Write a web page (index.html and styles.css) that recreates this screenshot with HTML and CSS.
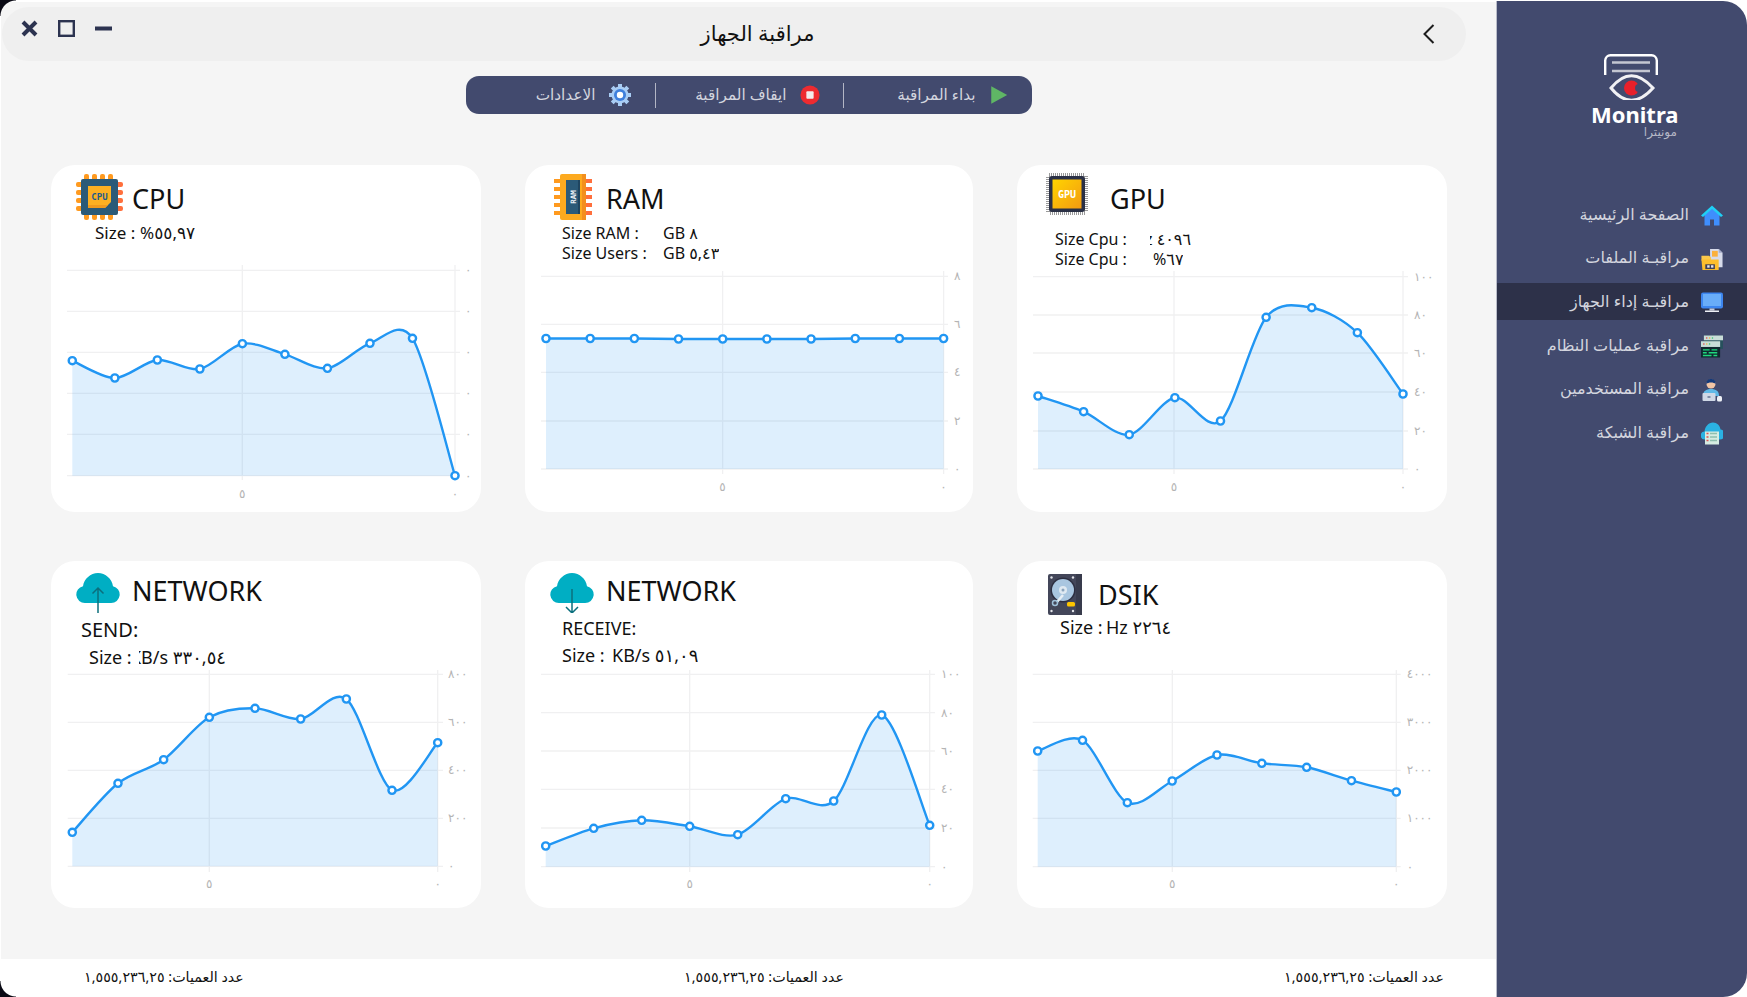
FILE: index.html
```html
<!DOCTYPE html>
<html lang="ar">
<head>
    <meta charset="UTF-8">
    <meta name="viewport" content="width=device-width, initial-scale=1.0">
    <title>Monitra</title>
    <link rel="stylesheet" href="styles.css">
</head>
<body>
    <span class="corner corner-top"></span>
    <span class="corner corner-bottom"></span>

    <div class="window">
        <main class="main">
            <header class="titlebar">
                <div class="win-controls">
                    <svg class="win-btn" viewBox="0 0 17 17"><path d="M2 2l13 13M15 2L2 15" stroke="#2c3350" stroke-width="4" fill="none"/></svg>
                    <svg class="win-btn" viewBox="0 0 17 17"><rect x="1.2" y="1.2" width="14.6" height="14.6" stroke="#2c3350" stroke-width="2.4" fill="none"/></svg>
                    <svg class="win-btn" viewBox="0 0 17 17"><rect y="6.5" width="17" height="4" fill="#2c3350"/></svg>
                </div>
                <h1 class="page-title">مراقبة الجهاز</h1>
                <svg class="back" viewBox="0 0 12 20"><path d="M10.5 1L1.5 10l9 9" stroke="#1d1d1d" stroke-width="2" fill="none"/></svg>
            </header>

            <nav class="toolbar" dir="rtl">
                <a class="tool">
                    <svg class="tool-icon" viewBox="0 0 22 22"><path d="M2.500 1.500L20 11 2.500 20.500z" fill="#5fb665"/></svg>
                    بداء المراقبة
                </a>
                <a class="tool">
                    <svg class="tool-icon" viewBox="0 0 22 22"><circle cx="11" cy="11" r="10.500" fill="#ee2b30"/><rect x="7" y="7" width="8" height="8" rx="1" fill="#f3ecec"/></svg>
                    ايقاف المراقبة
                </a>
                <a class="tool">
                    <svg class="tool-icon tool-gear" viewBox="0 0 24 24">
                        <path d="M12 12m-8.500 0a8.500 8.500 0 1 0 17 0a8.500 8.500 0 1 0-17 0" fill="#a9cdf5"/>
                        <path d="M12 1v5M12 18v5M1 12h5M18 12h5M4.200 4.200l3.500 3.500M16.300 16.300l3.500 3.500M19.800 4.200l-3.500 3.500M7.700 16.300l-3.500 3.500" stroke="#a9cdf5" stroke-width="4"/>
                        <circle cx="12" cy="12" r="6" fill="#3f7fdc"/>
                        <circle cx="12" cy="12" r="3.200" fill="#fff"/>
                    </svg>
                    الاعدادات
                </a>
            </nav>

            <div class="cards">
                <section class="card card-cpu">
                    <div class="card-head">
                        <svg class="card-icon" viewBox="0 0 47 46">
                            <g fill="#ff9a1f">
                                <rect x="8" y="0" width="5" height="7" rx="2"/><rect x="16" y="0" width="5" height="7" rx="2"/><rect x="24" y="0" width="5" height="7" rx="2"/><rect x="32" y="0" width="5" height="7" rx="2"/>
                                <rect x="8" y="39" width="5" height="7" rx="2"/><rect x="16" y="39" width="5" height="7" rx="2"/><rect x="24" y="39" width="5" height="7" rx="2"/><rect x="32" y="39" width="5" height="7" rx="2"/>
                                <rect x="0" y="8" width="7" height="5" rx="2"/><rect x="0" y="16" width="7" height="5" rx="2"/><rect x="0" y="24" width="7" height="5" rx="2"/><rect x="0" y="32" width="7" height="5" rx="2"/>
                            </g>
                            <g fill="#ff6f3c">
                                <rect x="40" y="8" width="7" height="5" rx="2"/><rect x="40" y="16" width="7" height="5" rx="2"/><rect x="40" y="24" width="7" height="5" rx="2"/><rect x="40" y="32" width="7" height="5" rx="2"/>
                            </g>
                            <rect x="5" y="5" width="37" height="36" rx="2" fill="#2b5a78"/>
                            <path d="M12 12h23v16l-6 6H12z" fill="#fdb022"/>
                            <path d="M12 31h20l-3 3H12z" fill="#f09a1e"/>
                            <text x="23.500" y="26" class="chip-text" fill="#1f5c8c">CPU</text>
                        </svg>
                        <h2 class="card-title">CPU</h2>
                    </div>
                    <div class="stats">
                        <p class="stat"><span class="stat-label">Size :</span><span class="stat-value">٥٥,٩٧%</span></p>
                    </div>
                    <svg class="chart" data-chart="cpu"></svg>
                </section>

                <section class="card card-ram">
                    <div class="card-head">
                        <svg class="card-icon" viewBox="0 0 38 46">
                            <g fill="#ff9a1f">
                                <rect x="0" y="5" width="6" height="4"/><rect x="0" y="13" width="6" height="4"/><rect x="0" y="21" width="6" height="4"/><rect x="0" y="29" width="6" height="4"/><rect x="0" y="37" width="6" height="4"/>
                            </g>
                            <g fill="#ff6f3c">
                                <rect x="32" y="5" width="6" height="4"/><rect x="32" y="13" width="6" height="4"/><rect x="32" y="21" width="6" height="4"/><rect x="32" y="29" width="6" height="4"/><rect x="32" y="37" width="6" height="4"/>
                            </g>
                            <rect x="6" y="0" width="26" height="46" rx="2" fill="#fdaa1f"/>
                            <rect x="28" y="0" width="4" height="46" fill="#f38f1e"/>
                            <rect x="12" y="6" width="14" height="34" fill="#2b5a78"/>
                            <rect x="24" y="6" width="2" height="34" fill="#1f4560"/>
                            <text x="-23" y="22" transform="rotate(-90)" class="chip-text chip-text-ram" fill="#e8eef3">RAM</text>
                        </svg>
                        <h2 class="card-title">RAM</h2>
                    </div>
                    <div class="stats">
                        <p class="stat"><span class="stat-label">Size RAM :</span><span class="stat-value">٨ GB</span></p>
                        <p class="stat"><span class="stat-label">Size Users :</span><span class="stat-value">٥,٤٣ GB</span></p>
                    </div>
                    <svg class="chart" data-chart="ram"></svg>
                </section>

                <section class="card card-gpu">
                    <div class="card-head">
                        <svg class="card-icon" viewBox="0 0 42 42">
                            <defs>
                                <linearGradient id="gpuGold" x1="0" y1="0" x2="1" y2="1">
                                    <stop offset="0" stop-color="#ffd400"/>
                                    <stop offset="1" stop-color="#f39a12"/>
                                </linearGradient>
                            </defs>
                            <rect x="3" y="3" width="36" height="36" fill="none" stroke="#9a9a9a" stroke-width="6" stroke-dasharray="1 1"/>
                            <rect x="3" y="3" width="36" height="36" rx="3" fill="#2a3045"/>
                            <rect x="6.500" y="6.500" width="29" height="29" fill="url(#gpuGold)"/>
                            <text x="21" y="24.500" class="chip-text chip-text-gpu" fill="#fff">GPU</text>
                        </svg>
                        <h2 class="card-title">GPU</h2>
                    </div>
                    <div class="stats">
                        <p class="stat"><span class="stat-label">Size Cpu :</span><span class="stat-value value-clip">٤٠٩٦ MHz</span></p>
                        <p class="stat"><span class="stat-label stat-label-wide">Size Cpu :</span><span class="stat-value">٦٧%</span></p>
                    </div>
                    <svg class="chart" data-chart="gpu"></svg>
                </section>

                <section class="card card-send">
                    <div class="card-head">
                        <svg class="card-icon" viewBox="0 0 44 40">
                            <path d="M9 30a8.500 8.500 0 0 1-2-16.800C8 6 14.500 0 22 0s14 6 15 13.200A8.500 8.500 0 0 1 35 30z" fill="#00aec3"/>
                            <path d="M22 40V15M16.500 20.500L22 15l5.500 5.500" stroke="#0b6f7d" stroke-width="1.500" fill="none"/>
                        </svg>
                        <h2 class="card-title">NETWORK</h2>
                    </div>
                    <div class="stats">
                        <p class="stat-name">SEND:</p>
                        <p class="stat"><span class="stat-label">Size :</span><span class="stat-value value-clip">٣٣٠,٥٤ KB/s</span></p>
                    </div>
                    <svg class="chart" data-chart="send"></svg>
                </section>

                <section class="card card-receive">
                    <div class="card-head">
                        <svg class="card-icon" viewBox="0 0 44 40">
                            <path d="M9 30a8.500 8.500 0 0 1-2-16.800C8 6 14.500 0 22 0s14 6 15 13.200A8.500 8.500 0 0 1 35 30z" fill="#00aec3"/>
                            <path d="M22 16v24M16 34l6 6 6-6" stroke="#0b6f7d" stroke-width="1.500" fill="none"/>
                        </svg>
                        <h2 class="card-title">NETWORK</h2>
                    </div>
                    <div class="stats">
                        <p class="stat-name">RECEIVE:</p>
                        <p class="stat"><span class="stat-label">Size :</span><span class="stat-value">٥١,٠٩ KB/s</span></p>
                    </div>
                    <svg class="chart" data-chart="receive"></svg>
                </section>

                <section class="card card-disk">
                    <div class="card-head">
                        <svg class="card-icon" viewBox="0 0 34 41">
                            <rect width="34" height="41" rx="2" fill="#434659"/>
                            <rect x="28" width="6" height="41" fill="#383b4c"/>
                            <circle cx="15" cy="16" r="12.500" fill="#2c2e40"/>
                            <circle cx="15" cy="16" r="11" fill="#a9c6e0"/>
                            <circle cx="15" cy="16" r="4" fill="#dfe9f2"/>
                            <circle cx="15" cy="16" r="1.500" fill="#8aa4bd"/>
                            <path d="M15 21l-6 7" stroke="#e6eef5" stroke-width="2.500"/>
                            <circle cx="7" cy="29" r="2.500" fill="none" stroke="#9fc0da" stroke-width="1.500"/>
                            <rect x="19" y="28" width="8" height="4.500" rx="1.500" fill="#fdc500"/>
                            <g fill="#e3e5ea">
                                <circle cx="3.500" cy="3.500" r="1.200"/><circle cx="25" cy="3.500" r="1.200"/><circle cx="3.500" cy="37" r="1.200"/><circle cx="25" cy="37" r="1.200"/>
                            </g>
                        </svg>
                        <h2 class="card-title">DSIK</h2>
                    </div>
                    <div class="stats">
                        <p class="stat"><span class="stat-label">Size :</span><span class="stat-value">٢٢٦٤ Hz</span></p>
                    </div>
                    <svg class="chart" data-chart="disk"></svg>
                </section>
            </div>

            <footer class="footer" dir="rtl">
                <span>عدد العميات: ١,٥٥٥,٢٣٦,٢٥</span>
                <span>عدد العميات: ١,٥٥٥,٢٣٦,٢٥</span>
                <span>عدد العميات: ١,٥٥٥,٢٣٦,٢٥</span>
            </footer>
        </main>

        <aside class="sidebar">
            <div class="logo">
                <svg class="logo-mark" viewBox="0 0 54 46">
                    <path d="M1.200 21V6.500A5.500 5.500 0 0 1 6.500 1.200h41A5.500 5.500 0 0 1 52.800 6.500V21" stroke="#fff" stroke-width="2.400" fill="none"/>
                    <path d="M8 8.500h38M8 17h38" stroke="#c3c6d1" stroke-width="2.500"/>
                    <path d="M7 34Q27 9.500 49 34Q27 58.500 7 34z" stroke="#f1f1f4" stroke-width="3" fill="none"/>
                    <circle cx="27.500" cy="34" r="7.500" fill="#e8202a"/>
                    <circle cx="35" cy="34" r="4" fill="#424a6e"/>
                </svg>
                <div class="logo-name">Monitra</div>
                <div class="logo-sub">مونيترا</div>
            </div>

            <nav class="side-nav" dir="rtl">
                <a class="side-link">
                    <svg class="side-icon" viewBox="0 0 22 20">
                        <path d="M3.500 9L11 3l7.500 6v11h-5.500v-6h-4v6H3.500z" fill="#3f8efc"/>
                        <path d="M0 10L11 0l11 10-2 1.500L11 3.500 2 11.500z" fill="#1fd0f5"/>
                    </svg>
                    الصفحة الرئيسية
                </a>
                <a class="side-link">
                    <svg class="side-icon" viewBox="0 0 22 24">
                        <path d="M9 1h9l4 4v15H9z" fill="#d7dbea"/>
                        <path d="M18 1l4 4h-4z" fill="#a5abc9"/>
                        <rect x="11" y="3" width="6" height="6" fill="#fbb03b"/>
                        <path d="M0 8h8l2 2v3H0z" fill="#fbc84a"/>
                        <path d="M0 12h18v11H1z" fill="#fdbe2c"/>
                        <rect x="4" y="17" width="10" height="5" fill="#3d3f58"/>
                        <rect x="6" y="18" width="2.500" height="2.500" fill="#e7e7ee"/>
                        <rect x="10" y="18" width="2.500" height="2.500" fill="#e7e7ee"/>
                    </svg>
                    مراقبـة الملفات
                </a>
                <a class="side-link is-active">
                    <svg class="side-icon" viewBox="0 0 22 20">
                        <rect width="22" height="16" rx="2" fill="#3d86ef"/>
                        <rect x="2" y="1.500" width="18" height="12" fill="#69adf8"/>
                        <rect x="8.500" y="16" width="5" height="2" fill="#c4cbdc"/>
                        <rect x="4" y="18" width="14" height="1.500" fill="#eef0f5"/>
                    </svg>
                    مراقبـة إداء الجهاز
                </a>
                <a class="side-link">
                    <svg class="side-icon" viewBox="0 0 23 23">
                        <rect x="3" width="20" height="14" fill="#27505c"/>
                        <rect x="3" y="0" width="20" height="5" fill="#c9ddd8"/>
                        <rect x="0" y="6" width="20" height="6" fill="#c9ddd8"/>
                        <circle cx="6" cy="2.500" r=".8" fill="#e64040"/><circle cx="9" cy="2.500" r=".8" fill="#f2b632"/><circle cx="12" cy="2.500" r=".8" fill="#35c46f"/>
                        <circle cx="3" cy="9" r=".8" fill="#e64040"/><circle cx="6" cy="9" r=".8" fill="#f2b632"/><circle cx="9" cy="9" r=".8" fill="#35c46f"/>
                        <rect x="0" y="12" width="20" height="11" fill="#10282f"/>
                        <path d="M2 15h7M11 15h6M2 18h4M8 18h9M2 21h9M13 21h4" stroke="#1fd87e" stroke-width="1.500"/>
                    </svg>
                    مراقبة عمليات النظام
                </a>
                <a class="side-link">
                    <svg class="side-icon" viewBox="0 0 22 23">
                        <circle cx="10" cy="5" r="4.500" fill="#f2c5a5"/>
                        <path d="M5.500 5C5 1 8 0 10 0s5 1 4.500 5C13 3 7 3 5.500 5z" fill="#143a7a"/>
                        <path d="M2 17c0-5 3-7 8-7s8 2 8 7z" fill="#5fb8e6"/>
                        <rect x="1.500" y="14" width="13" height="8" rx="1" fill="#cfd8e6"/>
                        <rect x="6.500" y="17" width="3" height="2" fill="#7f8ea8"/>
                        <rect x="16" y="17" width="5" height="5.500" rx="1.500" fill="#eef1f6"/>
                    </svg>
                    مراقبة المستخدمين
                </a>
                <a class="side-link">
                    <svg class="side-icon" viewBox="0 0 22 22">
                        <path d="M4 17a4 4 0 0 1-.5-8C4 4 7.500 0 12 0c4 0 7 3 7.500 7a5 5 0 0 1-1 10z" fill="#2bb2e2"/>
                        <rect x="4" y="9" width="14" height="13" fill="#d6ece2"/>
                        <path d="M9 11h7M9 14.500h7M9 18h7" stroke="#8fbfae" stroke-width="1.500"/>
                        <path d="M5.500 11h2M5.500 14.500h2M5.500 18h2" stroke="#e05252" stroke-width="1.500"/>
                    </svg>
                    مراقبة الشبكة
                </a>
            </nav>
        </aside>
    </div>

    <script src="chart.js"></script>
</body>
</html>
```

FILE: styles.css
```css
* {
    box-sizing: border-box;
}

body {
    margin: 0;
    background-color: #fff;
    font-family: "Noto Sans", "DejaVu Sans", sans-serif;
    color: #111;
    overflow: hidden;
}

.window {
    display: flex;
    width: 1747px;
    height: 997px;
}

.corner {
    position: absolute;
    left: 0;
    width: 16px;
    height: 16px;
}

.corner-top {
    top: 0;
    background: radial-gradient(circle at 100% 100%, transparent 15px, #0a0a14 16px);
}

.corner-bottom {
    bottom: 0;
    background: radial-gradient(circle at 100% 0, transparent 15px, #0a0a14 16px);
}

/* main area */
.main {
    display: flex;
    flex-direction: column;
    width: 1496px;
    background-color: #f5f5f5;
    border-top: 2px solid #fff;
    border-left: 1px solid #fff;
}

.titlebar {
    display: flex;
    align-items: center;
    flex: none;
    height: 54px;
    margin: 5px 30px 0 1px;
    padding: 0 31px 0 19px;
    background-color: #efefef;
    border-radius: 27px;
}

.win-controls {
    display: flex;
    gap: 20px;
    margin-top: -11px;
}

.win-btn {
    width: 17px;
    height: 17px;
}

.page-title {
    flex: 1;
    margin: 0;
    padding: 0 20px 3px 0;
    font-size: 21px;
    font-weight: 400;
    text-align: center;
}

.back {
    width: 12px;
    height: 20px;
}

.toolbar {
    display: grid;
    grid-template-columns: 189px 188px 189px;
    flex: none;
    width: 566px;
    height: 38px;
    margin: 15px auto 0;
    background-color: #424a6e;
    border-radius: 13px;
}

.tool {
    display: flex;
    align-items: center;
    gap: 13px;
    align-self: center;
    height: 25px;
    padding: 0 23px 3px 0;
    border-left: 1px solid rgba(255, 255, 255, 0.6);
    color: #d3d5de;
    font-size: 15.300px;
}

.tool:last-child {
    border-left: none;
}

.tool-icon {
    width: 20px;
    height: 22px;
    margin-top: 3px;
}

.tool-gear {
    width: 24px;
    height: 24px;
    margin-left: -1px;
}

/* cards */
.cards {
    display: grid;
    grid-template-columns: 430px 448px 430px;
    grid-auto-rows: 347px;
    column-gap: 44px;
    row-gap: 49px;
    flex: none;
    margin: 51px 0 0 50px;
}

.card {
    display: flex;
    flex-direction: column;
    background-color: #fff;
    border-radius: 24px;
    overflow: hidden;
}

.card-head {
    display: flex;
    align-items: center;
    flex: none;
}

.card-icon {
    flex: none;
}

.card-title {
    margin: 0;
    font-size: 27px;
    font-weight: 400;
    line-height: 30px;
}

.stats {
    flex: 1 1 0;
    min-height: 0;
}

.stat,
.stat-name {
    margin: 0;
}

.stat {
    display: flex;
    font-size: 16px;
    line-height: 20px;
}

.stat-label {
    flex: none;
}

.stat-value {
    direction: rtl;
    white-space: nowrap;
    overflow: hidden;
}

.chart {
    display: block;
    flex: none;
    width: 100%;
    height: 252px;
}

.chip-text {
    font-family: "DejaVu Sans Mono", monospace;
    font-size: 9px;
    font-weight: 700;
    text-anchor: middle;
}

.chip-text-ram {
    font-size: 7.500px;
}

.chip-text-gpu {
    font-size: 10px;
}

.card-cpu .card-head {
    padding: 9px 0 0 25px;
    gap: 9px;
}

.card-cpu .card-icon {
    width: 47px;
    height: 46px;
}

.card-cpu .card-title,
.card-ram .card-title {
    margin-top: 4px;
}

.card-cpu .stats {
    margin-top: 2px;
    padding-left: 44px;
}

.card-cpu .stat {
    font-size: 17px;
    line-height: 22px;
}

.card-cpu .stat-label {
    width: 45px;
}

.card-ram .card-head {
    padding: 9px 0 0 29px;
    gap: 14px;
}

.card-ram .card-icon {
    width: 38px;
    height: 46px;
}

.card-ram .stats {
    margin-top: 3px;
    padding-left: 37px;
}

.card-ram .stat-label {
    width: 101px;
}

.card-gpu .card-head {
    padding: 8px 0 0 29px;
    gap: 22px;
}

.card-gpu .card-icon {
    width: 42px;
    height: 42px;
}

.card-gpu .card-title {
    margin-top: 10px;
}

.card-gpu .stats {
    margin-top: 14px;
    padding-left: 38px;
}

.card-gpu .stat-label {
    width: 95px;
}

.card-gpu .stat-label-wide {
    width: 98px;
}

.card-gpu .value-clip {
    width: 41px;
}

.card-send .card-head,
.card-receive .card-head {
    padding: 12px 0 0 25px;
    gap: 12px;
}

.card-send .card-icon,
.card-receive .card-icon {
    width: 44px;
    height: 40px;
}

.card-send .card-title,
.card-receive .card-title {
    margin-top: -5px;
}

.stat-name {
    font-size: 20px;
    line-height: 27px;
}

.card-send .stats {
    margin-top: 3px;
}

.card-send .stat-name {
    padding-left: 30px;
}

.card-send .stat {
    margin-top: 4px;
    padding-left: 38px;
    font-size: 18px;
}

.card-send .stat-label {
    width: 50px;
}

.card-send .value-clip {
    width: 87px;
}

.card-receive .stats {
    margin-top: 2px;
    padding-left: 37px;
}

.card-receive .stat-name {
    font-size: 18px;
}

.card-receive .stat {
    margin-top: 3px;
    font-size: 18px;
}

.card-receive .stat-label {
    width: 50px;
}

.card-disk .card-head {
    padding: 13px 0 0 31px;
    gap: 16px;
}

.card-disk .card-icon {
    width: 34px;
    height: 41px;
}

.card-disk .stats {
    margin-top: 1px;
    padding-left: 43px;
}

.card-disk .stat {
    font-size: 18px;
    line-height: 22px;
}

.card-disk .stat-label {
    width: 46px;
}

.grid-line {
    stroke: #f0f0f1;
    stroke-width: 1.300;
}

.area {
    fill: rgba(33, 150, 243, 0.15);
}

.line {
    fill: none;
    stroke: #2196f3;
    stroke-width: 2.400;
}

.dot {
    fill: #fff;
    stroke: #2196f3;
    stroke-width: 2.400;
}

.tick {
    fill: #b4b4b4;
    font-family: "DejaVu Sans", sans-serif;
    font-size: 12px;
}

.footer {
    display: flex;
    justify-content: space-between;
    align-items: center;
    flex: none;
    height: 38px;
    margin-top: auto;
    padding: 0 52px 3px 83px;
    background-color: #fff;
    font-size: 14.300px;
}

/* sidebar */
.sidebar {
    width: 251px;
    margin-top: 1px;
    padding-top: 53px;
    background-color: #424a6e;
    border-left: 1px solid #b9bcc9;
    border-radius: 0 24px 24px 0;
}

.logo {
    height: 142px;
    padding-left: 94px;
    color: #fff;
}

.logo-mark {
    display: block;
    width: 54px;
    height: 46px;
    margin-left: 13px;
}

.logo-name {
    margin-top: 2px;
    font-size: 22px;
    font-weight: 700;
    line-height: 24px;
}

.logo-sub {
    width: 86px;
    margin-top: 1px;
    color: #b5b8c6;
    font-size: 12px;
    line-height: 10px;
    text-align: right;
}

.side-nav {
    display: flex;
    flex-direction: column;
    gap: 6.700px;
}

.side-link {
    display: flex;
    align-items: center;
    gap: 12px;
    height: 37px;
    padding: 0 24px 2px 0;
    color: #d3d5de;
    font-size: 16px;
}

.side-link.is-active {
    background-color: #2d3149;
}

.side-icon {
    flex: none;
    width: 22px;
    height: 23px;
    margin-top: 4px;
}
```

FILE: chart.js
```js
// all coordinates are window pixels, the viewBox of each svg maps them to the card
var charts = {
    cpu: {
        x: 51, y: 260, width: 430,
        left: 67, right: 460, grid: [270.3, 311.3, 352.3, 393.3, 434.3, 475.7],
        ticks: ['٠', '٠', '٠', '٠', '٠', '٠'], tickX: 465,
        xs: [72.3, 455], mid: 242.3, labelY: 498, top: 265, bottom: 480,
        ys: [360.7, 378, 360, 369, 343.7, 354.3, 368.3, 343.3, 338.3, 475.7]
    },
    ram: {
        x: 525, y: 260, width: 448,
        left: 541, right: 948, grid: [276.3, 324.3, 372.3, 421, 469],
        ticks: ['٨', '٦', '٤', '٢', '٠'], tickX: 954,
        xs: [546, 943.6], mid: 722.6, labelY: 491, top: 271, bottom: 474,
        ys: [338.5, 338.5, 338.5, 339, 339, 339, 339, 338.5, 338.5, 338.5]
    },
    gpu: {
        x: 1017, y: 260, width: 430,
        left: 1033, right: 1408, grid: [276.7, 315, 353, 392, 431, 469],
        ticks: ['١٠٠', '٨٠', '٦٠', '٤٠', '٢٠', '٠'], tickX: 1414,
        xs: [1038, 1403], mid: 1174, labelY: 491, top: 271, bottom: 474,
        ys: [396, 411.7, 434.7, 397.7, 421, 317.3, 307.7, 332.7, 394]
    },
    send: {
        x: 51, y: 656, width: 430,
        left: 67.7, right: 443, grid: [674.3, 722.3, 770.3, 818.3, 866.3],
        ticks: ['٨٠٠', '٦٠٠', '٤٠٠', '٢٠٠', '٠'], tickX: 448,
        xs: [72.3, 437.7], mid: 209.3, labelY: 888, top: 670, bottom: 872,
        ys: [832.3, 783.3, 759.7, 717.3, 708.3, 719, 699, 790.3, 742.7]
    },
    receive: {
        x: 525, y: 656, width: 448,
        left: 541, right: 935, grid: [674.3, 712.7, 751, 789.3, 828, 866.7],
        ticks: ['١٠٠', '٨٠', '٦٠', '٤٠', '٢٠', '٠'], tickX: 941,
        xs: [545.7, 929.7], mid: 689.7, labelY: 888, top: 670, bottom: 872,
        ys: [846, 828.3, 820.3, 826.3, 834.7, 798.7, 801, 715, 825.3]
    },
    disk: {
        x: 1017, y: 656, width: 430,
        left: 1032.7, right: 1400.7, grid: [674.3, 722.3, 770.3, 818.3, 866.7],
        ticks: ['٤٠٠٠', '٣٠٠٠', '٢٠٠٠', '١٠٠٠', '٠'], tickX: 1406.7,
        xs: [1037.7, 1396.3], mid: 1172.3, labelY: 888, top: 670, bottom: 872,
        ys: [751, 740.3, 802.7, 781, 755, 763.3, 767.3, 780.7, 792]
    }
};

function smoothPath(pts) {
    var k = 0.15;
    var d = 'M' + pts[0][0] + ' ' + pts[0][1];
    for (var i = 0; i < pts.length - 1; i++) {
        var p0 = pts[i - 1] || pts[i];
        var p1 = pts[i];
        var p2 = pts[i + 1];
        var p3 = pts[i + 2] || p2;
        d += 'C' + (p1[0] + (p2[0] - p0[0]) * k) + ' ' + (p1[1] + (p2[1] - p0[1]) * k) +
            ' ' + (p2[0] - (p3[0] - p1[0]) * k) + ' ' + (p2[1] - (p3[1] - p1[1]) * k) +
            ' ' + p2[0] + ' ' + p2[1];
    }
    return d;
}

function drawChart(svg, c) {
    var base = c.grid[c.grid.length - 1];
    var step = (c.xs[1] - c.xs[0]) / (c.ys.length - 1);
    var pts = c.ys.map(function (y, i) {
        return [c.xs[0] + step * i, y];
    });
    var html = '';

    c.grid.forEach(function (y, i) {
        html += '<line class="grid-line" x1="' + c.left + '" x2="' + c.right + '" y1="' + y + '" y2="' + y + '"/>';
        html += '<text class="tick" x="' + c.tickX + '" y="' + (y + 4) + '">' + c.ticks[i] + '</text>';
    });
    [c.mid, c.xs[1]].forEach(function (x) {
        html += '<line class="grid-line" x1="' + x + '" x2="' + x + '" y1="' + c.top + '" y2="' + c.bottom + '"/>';
    });
    html += '<text class="tick" text-anchor="middle" x="' + c.mid + '" y="' + c.labelY + '">٥</text>';
    html += '<text class="tick" text-anchor="middle" x="' + c.xs[1] + '" y="' + c.labelY + '">٠</text>';

    var line = smoothPath(pts);
    html += '<path class="area" d="' + line + 'L' + c.xs[1] + ' ' + base + 'L' + c.xs[0] + ' ' + base + 'Z"/>';
    html += '<path class="line" d="' + line + '"/>';
    pts.forEach(function (p) {
        html += '<circle class="dot" cx="' + p[0] + '" cy="' + p[1] + '" r="3.600"/>';
    });

    svg.setAttribute('viewBox', c.x + ' ' + c.y + ' ' + c.width + ' 252');
    svg.innerHTML = html;
}

document.querySelectorAll('.chart').forEach(function (svg) {
    drawChart(svg, charts[svg.dataset.chart]);
});
```
